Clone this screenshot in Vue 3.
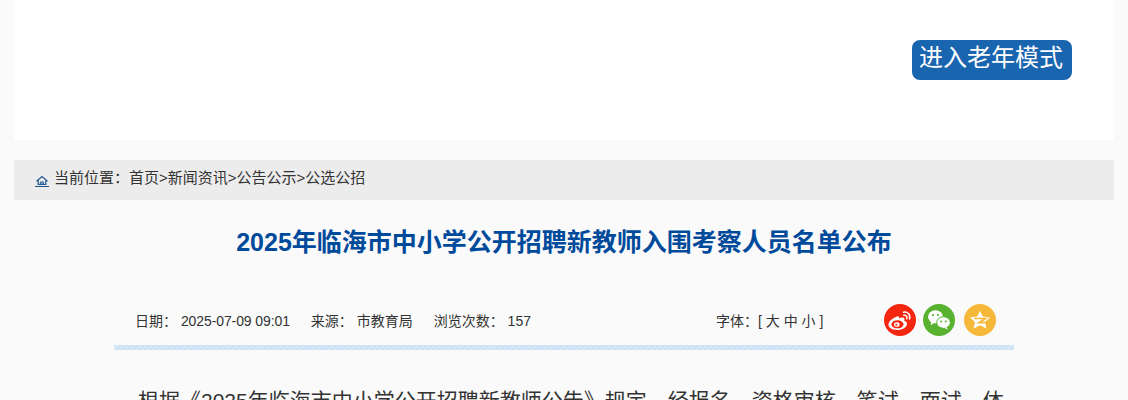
<template>
  <div class="page">
    <header class="top-panel">
      <a class="elder-btn">进入老年模式</a>
    </header>

    <nav class="crumbs">
      <svg class="home-icon" viewBox="0 0 14 12" width="14" height="12">
        <path d="M1.500 6.200 7 1.500l5.500 4.700M3.200 5.600v3.800h7.600V5.600M5.800 9.400V7h2.400v2.400" fill="none" stroke="#1f5a96" stroke-width="1.200" />
        <path d="M0 11.500h14" stroke="#1f4f86" stroke-width="1" />
      </svg>
      <span class="crumb-label">当前位置：</span>
      <span>首页&gt;新闻资讯&gt;公告公示&gt;公选公招</span>
    </nav>

    <article class="article">
      <h1 class="title">2025年临海市中小学公开招聘新教师入围考察人员名单公布</h1>

      <div class="meta">
        <div class="meta-left">
          <span>日期： <span class="date">2025-07-09 09:01</span></span>
          <span>来源： 市教育局</span>
          <span>浏览次数： 157</span>
        </div>
        <div class="font-size">字体：[ 大 中 小 ]</div>
        <div class="share">
          <a class="share-btn weibo">
            <svg viewBox="0 0 32 32" width="32" height="32">
              <path d="M13 12.500c-4.500 1.500-8.500 5-8.500 8.300 0 3.200 4 5.200 8.500 5.200 5.500 0 10-3 10-6.300 0-1.800-1.500-2.600-2.800-3 .7-1.700.3-3-1.600-3.100-1.300-.1-2.500.4-3.500.8.400-1.600-.6-2.600-2.100-1.900z" fill="#fff" />
              <ellipse cx="13.500" cy="20.300" rx="6" ry="4" fill="#f5260f" />
              <ellipse cx="12.800" cy="20.500" rx="2.800" ry="2.300" fill="#fff" />
              <circle cx="12.300" cy="20.800" r="1" fill="#f5260f" />
              <path d="M19.500 8.200c4.300-.7 7.300 2.700 6 6.800M19.800 11.300c2.200-.4 3.700 1.300 3 3.400" fill="none" stroke="#fff" stroke-width="1.500" stroke-linecap="round" />
            </svg>
          </a>
          <a class="share-btn wechat">
            <svg viewBox="0 0 32 32" width="32" height="32">
              <ellipse cx="12.500" cy="12.800" rx="7.500" ry="6.500" fill="#fff" />
              <path d="M8.500 17.500l-1 3.700 4-2.400z" fill="#fff" />
              <ellipse cx="20.500" cy="18.500" rx="6.800" ry="5.800" fill="#fff" stroke="#58b22f" stroke-width="1" />
              <path d="M23.500 23l1.500 2.800-4-2z" fill="#fff" />
              <circle cx="10" cy="11" r="1.100" fill="#58b22f" />
              <circle cx="15" cy="11" r="1.100" fill="#58b22f" />
              <circle cx="18.200" cy="17.500" r="1" fill="#58b22f" />
              <circle cx="22.800" cy="17.500" r="1" fill="#58b22f" />
            </svg>
          </a>
          <a class="share-btn qzone">
            <svg viewBox="0 0 32 32" width="32" height="32">
              <path d="M16 7l2.800 5.600 7.200.9-5 4.400 1.400 6.600-6.400-3.200-6.400 3.200 1.400-6.600-5-4.400 7.200-.9z" fill="#fff" />
              <path d="M10 14.500h11.500l-6.500 4.200h6" fill="none" stroke="#f5b838" stroke-width="1.700" />
            </svg>
          </a>
        </div>
      </div>

      <div class="content">
        <p>根据《2025年临海市中小学公开招聘新教师公告》规定，经报名、资格审核、笔试、面试、体检等程序，现将入围考察人员名单予以公布。</p>
      </div>
    </article>
  </div>
</template>

<script setup>
</script>

<style>
html, body {
  margin: 0;
  background: #fafafa;
}
</style>

<style scoped>
.page {
  width: 1100px;
  height: 400px;
  overflow: hidden;
  margin-left: 14px;
  font-family: "Liberation Sans", "Noto Sans CJK SC", sans-serif;
  color: #333;
}

.top-panel {
  height: 140px;
  background: #fff;
  display: flex;
  justify-content: flex-end;
  align-items: flex-start;
  padding: 40px 42px 0 0;
  box-sizing: border-box;
}

.elder-btn {
  width: 160px;
  height: 40px;
  box-sizing: border-box;
  padding-right: 2px;
  background: #1a65b0;
  color: #fff;
  border-radius: 8px;
  font-size: 24px;
  line-height: 36px;
  text-align: center;
}

.crumbs {
  margin-top: 20px;
  height: 40px;
  background: #ececec;
  display: flex;
  align-items: center;
  padding-left: 21px;
  padding-bottom: 8px;
  box-sizing: border-box;
  font-size: 15px;
  color: #333;
}

.home-icon {
  margin: 10px 5px 0 0;
}

.title {
  margin: 27px 0 0;
  font-size: 25px;
  line-height: 30px;
  font-weight: bold;
  color: #004a9c;
  text-align: center;
}

.meta {
  width: 900px;
  height: 46px;
  margin: 47px auto 0;
  padding: 0 0 0 21px;
  box-sizing: border-box;
  display: flex;
  align-items: flex-start;
  font-size: 14px;
  color: #333;
  background: repeating-linear-gradient(135deg, #cbe1f5 0 2px, #d6e7f7 2px 4px) left bottom / 100% 5px no-repeat;
}

.meta-left {
  display: flex;
  gap: 21px;
  padding-top: 7px;
  line-height: 20px;
  width: 581px;
}

.date {
  letter-spacing: -0.1px;
}

.font-size {
  padding-top: 7px;
  line-height: 20px;
  width: 168px;
}

.share {
  display: flex;
}

.share-btn {
  width: 32px;
  height: 32px;
  border-radius: 50%;
  display: block;
}

.weibo { background: #f5260f; }
.wechat { background: #58b22f; margin-left: 7px; }
.qzone { background: #f5b838; margin-left: 9px; }

.share-btn svg {
  display: block;
}

.content {
  width: 900px;
  margin: 0 auto;
}

.content p {
  margin: 33px 0 0;
  text-indent: 24px;
  font-size: 21px;
  line-height: 36px;
  color: #333;
}
</style>
